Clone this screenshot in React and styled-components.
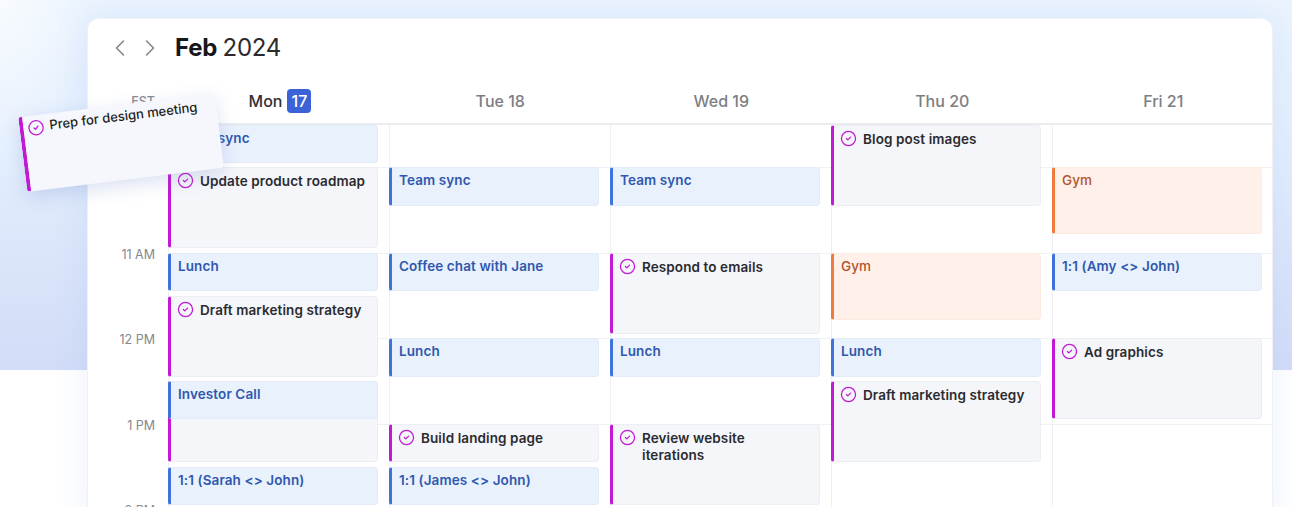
import React from "react";
import styled, { createGlobalStyle } from "styled-components";
import { ChevronLeft, ChevronRight, CircleCheck } from "lucide-react";

const Global = createGlobalStyle`
  html, body { margin: 0; padding: 0; background: #fff; }
  body { width: 1292px; height: 507px; overflow: hidden; font-family: Inter, "Liberation Sans", sans-serif; -webkit-font-smoothing: antialiased; }
`;

const Page = styled.div`
  position: relative;
  width: 1292px;
  height: 507px;
  overflow: hidden;
  padding: 18px 19px 0 87px;
  box-sizing: border-box;
  background:
    radial-gradient(ellipse 90px 170px at 0 0, rgba(255, 255, 255, 0.65), rgba(255, 255, 255, 0)) 0 0 / 100% 370px no-repeat,
    linear-gradient(180deg, #ebf4fe 0%, #e3eefd 40%, #d2dcf7 100%) 0 0 / 100% 370px no-repeat,
    #fff;
`;

const Card = styled.div`
  width: 1186px;
  background: #fff;
  border: 1px solid #eff1f5;
  border-bottom: 0;
  border-radius: 12px 12px 0 0;
  box-sizing: border-box;
  box-shadow: 0 0 34px rgba(110, 155, 235, 0.14);
`;

const TopBar = styled.div`
  display: flex;
  align-items: center;
  height: 57px;
  padding-left: 18px;
  box-sizing: border-box;
`;

const NavButton = styled.span`
  display: flex;
  width: 28px;
  margin-right: 2px;
  color: #85878c;
  &:last-of-type { margin-right: 11px; }
`;

const Title = styled.h1`
  margin: 0;
  font-size: 24px;
  line-height: 30px;
  font-weight: 400;
  color: #2a2a2d;
  letter-spacing: -0.25px;
  word-spacing: -1px;
  strong { font-weight: 700; color: #17171a; }
`;

const DayHeader = styled.div`
  display: grid;
  grid-template-columns: 80px repeat(5, 221px);
  height: 48.5px;
  padding-top: 3.5px;
  border-bottom: 2px solid #ebecef;
  box-sizing: border-box;
`;

const Zone = styled.div`
  display: flex;
  align-items: center;
  justify-content: flex-end;
  padding-right: 13px;
  font-size: 12.5px;
  font-weight: 500;
  color: #8a8c91;
`;

const DayName = styled.div`
  display: flex;
  align-items: center;
  justify-content: center;
  gap: 5px;
  padding-left: ${(p) => (p.$today ? 3 : 1.5)}px;
  font-size: 16px;
  font-weight: 500;
  color: ${(p) => (p.$today ? "#303034" : "#7c7e83")};
`;

const Badge = styled.span`
  display: flex;
  align-items: center;
  justify-content: center;
  width: 24px;
  height: 24px;
  border-radius: 4px;
  background: #3b62d6;
  color: #fff;
`;

const Body = styled.div`
  display: grid;
  grid-template-columns: 80px repeat(5, 221px);
  height: 400px;
  overflow: hidden;
`;

const Gutter = styled.div`
  display: grid;
  grid-auto-rows: 85.5px;
  padding-top: 1.5px;
`;

const HourLabel = styled.div`
  display: flex;
  align-items: center;
  justify-content: flex-end;
  padding-right: 13px;
  font-size: 12.5px;
  color: #85878c;
`;

const Column = styled.div`
  display: grid;
  grid-template-rows: repeat(10, 42.75px);
  align-content: start;
  padding-right: 11px;
  box-sizing: border-box;
  height: 427.5px;
  border-left: 1px solid #eeeff2;
  background: repeating-linear-gradient(
    to bottom,
    transparent 0,
    transparent 42.25px,
    #f0f1f4 42.25px,
    #f0f1f4 43.25px,
    transparent 43.25px,
    transparent 85.5px
  );
`;

const palette = {
  blue: { bg: "#e9f1fd", border: "#e3eaf8", bar: "#3e73dd", text: "#2f58ae" },
  orange: { bg: "#fff0e9", border: "#fdeae1", bar: "#ee7a3e", text: "#b5532c" },
  task: { bg: "#f5f6fa", border: "#eceef3", bar: "#c318d4", text: "#2a2b30" },
};

const Event = styled.div`
  grid-column: 1;
  grid-row: ${(p) => p.$start + 1} / span ${(p) => p.$span};
  z-index: ${(p) => (p.$kind === "blue" ? 1 : 0)};
  margin-left: -1px;
  min-height: 0;
  height: ${(p) => (p.$kind === "orange" ? 67 : p.$span * 42.75 - 4.5)}px;
  box-sizing: border-box;
  display: flex;
  align-items: flex-start;
  gap: 6px;
  padding: ${(p) => (p.$kind === "task" ? 5 : 4)}px 8px 0 7px;
  background: ${(p) => palette[p.$kind].bg};
  border: 1px solid ${(p) => palette[p.$kind].border};
  border-left: 3px solid ${(p) => palette[p.$kind].bar};
  border-radius: 3px 4px 4px 3px;
  font-size: 13.5px;
  line-height: 17px;
  font-weight: ${(p) => (p.$kind === "orange" ? 500 : 600)};
  color: ${(p) => palette[p.$kind].text};
  white-space: pre-line;
  letter-spacing: 0.1px;
  svg { flex: none; color: #c318d4; margin: -1px 0 0 -1px; }
`;

const Dragged = styled.div`
  position: absolute;
  left: 22px;
  top: 105px;
  z-index: 5;
  width: 198px;
  height: 75px;
  box-sizing: border-box;
  display: flex;
  align-items: flex-start;
  gap: 5px;
  padding: 3px 8px 0 4px;
  background: #f6f7fc;
  border-left: 4px solid #c318d4;
  border-radius: 3px;
  transform: rotate(-7deg);
  box-shadow: 0 6px 18px rgba(90, 120, 190, 0.22);
  font-size: 13px;
  line-height: 17px;
  font-weight: 500;
  color: #1d1e22;
  white-space: nowrap;
  svg { flex: none; color: #c318d4; margin-top: 1px; }
`;

const days = [
  [
    ["blue", 0, 1, "Team sync"],
    ["task", 1, 2, "Update product roadmap"],
    ["blue", 3, 1, "Lunch"],
    ["task", 4, 2, "Draft marketing strategy"],
    ["task", 6, 2, ""],
    ["blue", 6, 1, "Investor Call"],
    ["blue", 8, 1, "1:1 (Sarah <> John)"],
  ],
  [
    ["blue", 1, 1, "Team sync"],
    ["blue", 3, 1, "Coffee chat with Jane"],
    ["blue", 5, 1, "Lunch"],
    ["task", 7, 1, "Build landing page"],
    ["blue", 8, 1, "1:1 (James <> John)"],
  ],
  [
    ["blue", 1, 1, "Team sync"],
    ["task", 3, 2, "Respond to emails"],
    ["blue", 5, 1, "Lunch"],
    ["task", 7, 2, "Review website\niterations"],
  ],
  [
    ["task", 0, 2, "Blog post images"],
    ["orange", 3, 2, "Gym"],
    ["blue", 5, 1, "Lunch"],
    ["task", 6, 2, "Draft marketing strategy"],
  ],
  [
    ["orange", 1, 2, "Gym"],
    ["blue", 3, 1, "1:1 (Amy <> John)"],
    ["task", 5, 2, "Ad graphics"],
  ],
];

const hours = ["10 AM", "11 AM", "12 PM", "1 PM", "2 PM"];
const dayNames = ["Tue 18", "Wed 19", "Thu 20", "Fri 21"];

export default function App() {
  return (
    <Page>
      <Global />
      <Card>
        <TopBar>
          <NavButton><ChevronLeft size={28} strokeWidth={1.4} /></NavButton>
          <NavButton><ChevronRight size={28} strokeWidth={1.4} /></NavButton>
          <Title><strong>Feb</strong> 2024</Title>
        </TopBar>
        <DayHeader>
          <Zone>EST</Zone>
          <DayName $today>Mon <Badge>17</Badge></DayName>
          {dayNames.map((d) => <DayName key={d}>{d}</DayName>)}
        </DayHeader>
        <Body>
          <Gutter>
            {hours.map((h) => <HourLabel key={h}>{h}</HourLabel>)}
          </Gutter>
          {days.map((events, i) => (
            <Column key={i}>
              {events.map(([kind, start, span, label], j) => (
                <Event key={j} $kind={kind} $start={start} $span={span}>
                  {kind === "task" && label && <CircleCheck size={17} strokeWidth={1.8} />}
                  <span>{label}</span>
                </Event>
              ))}
            </Column>
          ))}
        </Body>
      </Card>
      <Dragged>
        <CircleCheck size={17} strokeWidth={1.8} />
        <span>Prep for design meeting</span>
      </Dragged>
    </Page>
  );
}
